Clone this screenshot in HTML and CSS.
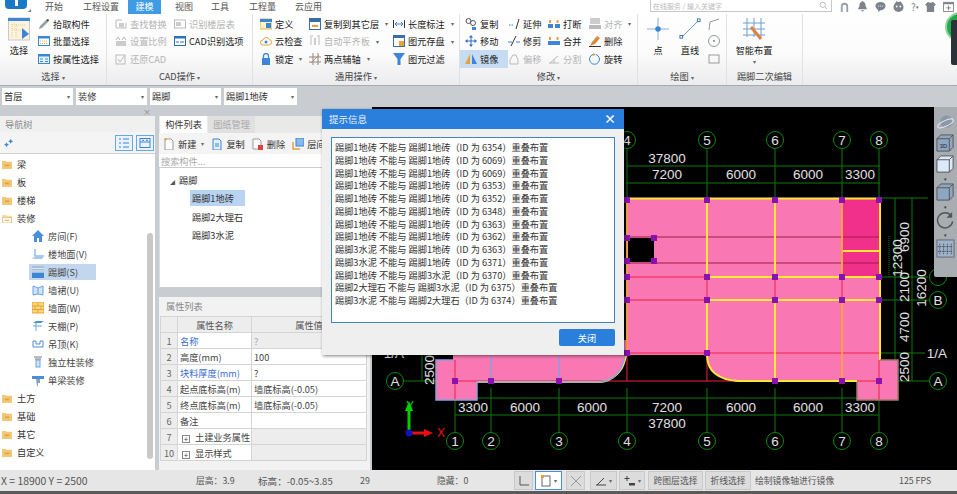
FILE: index.html
```html
<!DOCTYPE html>
<html lang="zh">
<head>
<meta charset="utf-8">
<title>GTJ</title>
<link rel="stylesheet" href="styles.css">
</head>
<body>
<div class="app">
  <header class="topbar">
    <div class="logo"><span class="logo-i"></span><span class="logo-arrow"></span></div>
    <nav class="tabs">
      <span class="tab w1">开始</span><span class="tab w2">工程设置</span><span class="tab active">建模</span><span class="tab w3">视图</span><span class="tab w4">工具</span><span class="tab w5">工程量</span><span class="tab">云应用</span>
    </nav>
    <div class="searchbox"><span class="searchtext">在线服务 / 输入关键字</span><svg class="ic9" viewBox="0 0 12 12"><circle cx="5" cy="5" r="3.5" fill="none" stroke="#aaa"/><path d="M8 8l3 3" stroke="#aaa"/></svg></div>
    <div class="topicons">
      <svg class="tic" viewBox="0 0 12 12"><path d="M2 12V6a4 4 0 018 0v6H8V6a2 2 0 00-4 0v6z" fill="#9aa0a6"/></svg>
      <svg class="tic" viewBox="0 0 12 12"><path d="M6 0a1 1 0 011 1c2 .6 2.400 2.500 2.400 4.500L11 9H1l1.600-3.500C2.600 3.500 3 1.600 5 1a1 1 0 011-1zM4.500 10h3a1.500 1.500 0 01-3 0z" fill="#7d8389"/></svg>
      <svg class="tic" viewBox="0 0 12 12"><ellipse cx="6" cy="5.500" rx="5.500" ry="4.500" fill="#7d8389"/><path d="M3 9l1 3 3-3z" fill="#7d8389"/><path d="M3.500 5.500h5" stroke="#fff" stroke-dasharray="1 1"/></svg>
      <svg class="tic" viewBox="0 0 12 12"><circle cx="6" cy="6.500" r="5.500" fill="#7d8389"/><path d="M2 3l2-3 2 2 2-2 2 3z" fill="#7d8389"/><circle cx="4" cy="6" r="1" fill="#fff"/><circle cx="8" cy="6" r="1" fill="#fff"/></svg>
      <span class="help">?<i class="tiny">▾</i></span>
      <svg class="tic" viewBox="0 0 12 12"><path d="M3 1l3 1 3-1 3 3-2 1.500V12H2V5.500L0 4z" fill="#7d8389"/></svg>
      <svg class="tic" viewBox="0 0 12 12"><path d="M.5 1.500h11v10H.5z" fill="#fff" stroke="#7d8389"/><path d="M.5 1.500h11v2H.5z" fill="#7d8389"/><path d="M6 5v5M3.500 7.500h5" stroke="#7d8389"/></svg>
    </div>
    <div class="float-ball"></div>
    <div class="float-strip"></div>
  </header>

  <section class="ribbon">
    <div class="group g-select">
      <div class="group-body p-select">
        <div class="bigbtn big-select">
          <svg class="big" viewBox="0 0 22 24"><rect x="0.500" y="1" width="21" height="22" fill="#fbf3df" stroke="#c9c9c9"/><rect x="0" y="1" width="22" height="3" fill="#3b86d8"/><path d="M4 7v14M8 7v14M4 8h14M4 13h14" stroke="#edc98a" stroke-dasharray="1 1"/><path d="M14 11l7 6-7 5z" fill="#3b86d8"/></svg>
          <span>选择</span>
        </div>
        <div class="col">
          <div class="rb"><svg class="ic" viewBox="0 0 12 12"><path d="M1 11l1-3 6-6 2 2-6 6z" fill="#9aa0a6"/><path d="M8 2l2-1 1 1-1 2z" fill="#444"/></svg><span>拾取构件</span></div>
          <div class="rb"><svg class="ic" viewBox="0 0 12 12"><rect x=".5" y="1.500" width="11" height="9" fill="#fff" stroke="#3b86d8"/><rect y="1" width="12" height="2.500" fill="#3b86d8"/><path d="M2 6h8M2 8.500h8" stroke="#e8a23a" stroke-dasharray="1 1"/></svg><span>批量选择</span></div>
          <div class="rb"><svg class="ic" viewBox="0 0 12 12"><rect x=".5" y="1.500" width="11" height="9" fill="#eaf2fb" stroke="#3b86d8"/><rect y="1" width="12" height="2.500" fill="#3b86d8"/><path d="M2 6h3M7 6h3M2 8.500h3M7 8.500h3" stroke="#3b86d8"/></svg><span>按属性选择</span></div>
        </div>
      </div>
      <div class="group-label">选择 <i class="tiny">▾</i></div>
    </div>

    <div class="group g-cad">
      <div class="group-body p-cad">
        <div class="col c-cad1 off">
          <div class="rb"><svg class="ic" viewBox="0 0 12 12"><path d="M1 2h6M1 2v8h10V5" fill="none" stroke="#bbb"/><rect x="4" y="5" width="5" height="4" fill="#ccc"/></svg><span>查找替换</span></div>
          <div class="rb"><svg class="ic" viewBox="0 0 12 12"><path d="M1 5l2-3 2 3M7 5l2-3 2 3" fill="none" stroke="#bbb"/><rect x="1" y="6" width="10" height="5" fill="#ccc"/></svg><span>设置比例</span></div>
          <div class="rb"><svg class="ic" viewBox="0 0 12 12"><rect x="1" y="2" width="9" height="9" fill="none" stroke="#bbb"/><path d="M3 6l2 3 5-7" fill="none" stroke="#bbb"/></svg><span>还原CAD</span></div>
        </div>
        <div class="col">
          <div class="rb off"><svg class="ic" viewBox="0 0 12 12"><rect x=".5" y="2" width="11" height="8" fill="none" stroke="#bbb"/><rect x="2" y="4" width="5" height="4" fill="#ccc"/></svg><span>识别楼层表</span></div>
          <div class="rb"><svg class="ic" viewBox="0 0 12 12"><rect x=".5" y="1.500" width="11" height="9" fill="#fff" stroke="#2b6fc0"/><rect y="1" width="12" height="2.500" fill="#2b6fc0"/><path d="M2 7h3M6 7h4" stroke="#2b6fc0"/></svg><span>CAD识别选项</span></div>
        </div>
      </div>
      <div class="group-label">CAD操作 <i class="tiny">▾</i></div>
    </div>

    <div class="group g-common">
      <div class="group-body p-common">
        <div class="col c-com1">
          <div class="rb"><svg class="ic" viewBox="0 0 12 12"><rect y="1" width="12" height="10" fill="#fff2c4" stroke="#d9b658"/><rect y="1" width="12" height="3" fill="#3b86d8"/><rect x="6" y="5" width="5" height="5" fill="#3b86d8"/></svg><span>定义</span></div>
          <div class="rb"><svg class="ic" viewBox="0 0 12 12"><path d="M3 10a2.500 2.500 0 010-5 3.500 3.500 0 016.500-.5A2.800 2.800 0 019 10z" fill="#fff" stroke="#e8a23a"/><circle cx="6" cy="7" r="1.500" fill="#3b86d8"/></svg><span>云检查</span></div>
          <div class="rb"><svg class="ic" viewBox="0 0 12 12"><rect x="2" y="5" width="8" height="7" fill="#3b86d8"/><path d="M3.500 5V3a2.500 2.500 0 015 0v2" fill="none" stroke="#3b86d8" stroke-width="1.300"/></svg><span>锁定</span><i class="tiny">▾</i></div>
        </div>
        <div class="col c-com2">
          <div class="rb"><svg class="ic" viewBox="0 0 12 12"><rect x=".5" y=".5" width="11" height="11" fill="#fff" stroke="#3b6ea8"/><rect y="0" width="12" height="4" fill="#3b6ea8"/><path d="M3 8h6" stroke="#e8a23a" stroke-width="2"/></svg><span>复制到其它层</span><i class="tiny">▾</i></div>
          <div class="rb off"><svg class="ic" viewBox="0 0 12 12"><path d="M2 2v8M10 2v8M1 1h3M8 1h3" stroke="#bbb" fill="none"/><rect x="5" y="3" width="2" height="7" fill="#ccc"/></svg><span>自动平齐板</span><i class="tiny">▾</i></div>
          <div class="rb"><svg class="ic" viewBox="0 0 12 12"><path d="M4 0v12M9 0v12M0 4h12M0 9h12" stroke="#888"/><path d="M2 10l8-8" stroke="#d98a3a"/></svg><span>两点辅轴</span><i class="tiny">▾</i></div>
        </div>
        <div class="col">
          <div class="rb"><svg class="ic" viewBox="0 0 12 12"><path d="M.5 2v8M11.500 2v8" stroke="#333"/><path d="M2 6h8M2 6l2-2M2 6l2 2M10 6L8 4M10 6L8 8" stroke="#3b86d8" fill="none"/></svg><span>长度标注</span><i class="tiny">▾</i></div>
          <div class="rb"><svg class="ic" viewBox="0 0 12 12"><rect x=".5" y=".5" width="11" height="11" fill="#fff" stroke="#3b6ea8"/><rect width="12" height="3" fill="#3b6ea8"/><rect x="6" y="6" width="5" height="5" fill="#e8a23a"/></svg><span>图元存盘</span><i class="tiny">▾</i></div>
          <div class="rb"><svg class="ic" viewBox="0 0 12 12"><path d="M0 0h12L7.500 6v6h-3V6z" fill="#3b86d8"/></svg><span>图元过滤</span></div>
        </div>
      </div>
      <div class="group-label">通用操作 <i class="tiny">▾</i></div>
    </div>

    <div class="group g-modify">
      <div class="group-body p-modify">
        <div class="col c-mod1">
          <div class="rb"><svg class="ic" viewBox="0 0 12 12"><circle cx="3.500" cy="3" r="2.500" fill="none" stroke="#555"/><circle cx="8" cy="5" r="2.500" fill="none" stroke="#555"/><path d="M7 9h4v3H7z" fill="#3b86d8"/></svg><span>复制</span></div>
          <div class="rb"><svg class="ic" viewBox="0 0 12 12"><path d="M6 0l2 2.500H4zM6 12l2-2.500H4zM0 6l2.500-2v4zM12 6L9.500 4v4z" fill="#2b6fc0"/><path d="M6 2v8M2 6h8" stroke="#2b6fc0"/></svg><span>移动</span></div>
          <div class="rb sel"><svg class="ic" viewBox="0 0 12 12"><path d="M5 1v10H0z" fill="#e8a23a"/><path d="M7 1v10h5z" fill="#3b86d8"/></svg><span>镜像</span></div>
        </div>
        <div class="col c-mod2">
          <div class="rb"><svg class="ic" viewBox="0 0 12 12"><path d="M1 7h5" stroke="#3b86d8" stroke-dasharray="1.500 1"/><path d="M8 11l3-10" stroke="#333"/></svg><span>延伸</span></div>
          <div class="rb"><svg class="ic" viewBox="0 0 12 12"><path d="M0 7h4M8 7h4" stroke="#3b86d8"/><path d="M3 11l5-10" stroke="#333"/></svg><span>修剪</span></div>
          <div class="rb off"><svg class="ic" viewBox="0 0 12 12"><path d="M2 11V7l3-5h3l2 5v4z" fill="none" stroke="#bbb"/></svg><span>偏移</span></div>
        </div>
        <div class="col c-mod3">
          <div class="rb"><svg class="ic" viewBox="0 0 12 12"><rect y="6" width="5" height="4" fill="#3b86d8"/><rect x="7" y="6" width="5" height="4" fill="#3b86d8"/><path d="M2 2v3M9.500 2v3" stroke="#e8a23a" stroke-width="2"/></svg><span>打断</span></div>
          <div class="rb"><svg class="ic" viewBox="0 0 12 12"><rect y="6" width="12" height="4" fill="#3b86d8"/><path d="M2 2v3M9.500 2v3" stroke="#e8a23a" stroke-width="2"/></svg><span>合并</span></div>
          <div class="rb off"><svg class="ic" viewBox="0 0 12 12"><path d="M1 10h10M2 10l8-7M6 10V6" fill="none" stroke="#bbb"/></svg><span>分割</span></div>
        </div>
        <div class="col">
          <div class="rb off"><svg class="ic" viewBox="0 0 12 12"><rect x="1" y="0" width="10" height="6" fill="#ccc"/><rect y="7" width="12" height="4" fill="#bbb"/></svg><span>对齐</span><i class="tiny">▾</i></div>
          <div class="rb"><svg class="ic" viewBox="0 0 12 12"><path d="M1 11l2-4 5-6 3 2-5 6z" fill="#d98a3a"/><path d="M0 11.500h12" stroke="#333"/></svg><span>删除</span></div>
          <div class="rb"><svg class="ic" viewBox="0 0 12 12"><path d="M7 1.500a5 5 0 11-3 0" fill="none" stroke="#3b86d8"/><path d="M4 0l3 1.500L4 3z" fill="#e8a23a"/></svg><span>旋转</span></div>
        </div>
      </div>
      <div class="group-label">修改 <i class="tiny">▾</i></div>
    </div>

    <div class="group g-draw">
      <div class="group-body p-draw">
        <div class="bigbtn big-dot">
          <svg class="big" viewBox="0 0 24 24"><path d="M12 0v24M0 12h24" stroke="#7fa9d6"/><circle cx="12" cy="12" r="3" fill="#3b86d8"/></svg>
          <span>点</span>
        </div>
        <div class="bigbtn big-line">
          <svg class="big" viewBox="0 0 24 24"><path d="M3 21L21 3" stroke="#5a8fc8"/><rect x="1" y="19" width="3" height="3" fill="#fff" stroke="#3b6ea8"/><rect x="20" y="1" width="3" height="3" fill="#fff" stroke="#3b6ea8"/></svg>
          <span>直线</span>
        </div>
        <div class="col">
          <div class="rb"><svg class="ic" viewBox="0 0 12 12"><path d="M1 12l1-8 9-3" fill="none" stroke="#999"/></svg></div>
          <div class="rb"><svg class="ic" viewBox="0 0 12 12"><circle cx="6" cy="6" r="5.500" fill="none" stroke="#999"/><circle cx="6" cy="6" r="1" fill="#5a8fc8"/></svg></div>
          <div class="rb"><svg class="ic" viewBox="0 0 12 12"><rect x="1" y="2" width="10" height="8" fill="none" stroke="#999"/></svg></div>
        </div>
      </div>
      <div class="group-label">绘图 <i class="tiny">▾</i></div>
    </div>

    <div class="group g-second">
      <div class="group-body p-second">
        <div class="bigbtn big-smart">
          <svg class="big" viewBox="0 0 22 24"><path d="M4 1v19M11 1v19M18 1v19M0 6h22M0 12h22M0 18h22" stroke="#6d9fd6"/><path d="M8 10l10 12" stroke="#e0833a" stroke-width="3"/></svg>
          <span>智能布置</span>
          <i class="tiny">▾</i>
        </div>
      </div>
      <div class="group-label">踢脚二次编辑</div>
    </div>
  </section>

  <section class="selectors">
    <div class="sel-box">首层<i class="tiny">▾</i></div>
    <div class="sel-box">装修<i class="tiny">▾</i></div>
    <div class="sel-box">踢脚<i class="tiny">▾</i></div>
    <div class="sel-box">踢脚1地砖<i class="tiny">▾</i></div>
  </section>

  <main class="main">
    <aside class="nav">
      <div class="nav-close">×</div>
      <div class="nav-title">导航树</div>
      <div class="nav-tools">
        <svg class="sparkle" viewBox="0 0 12 12"><path d="M3 5l1 2 2 1-2 1-1 2-1-2-2-1 2-1zM8 1l1 2 2 1-2 1-1 2-1-2-2-1 2-1z" fill="#3b86d8"/></svg>
        <span class="tool-btn"><svg viewBox="0 0 12 12"><path d="M1 2h2M1 6h2M1 10h2M5 2h6M5 6h6M5 10h6" stroke="#3b86d8"/></svg></span>
        <span class="tool-btn"><svg viewBox="0 0 12 12"><rect x="1" y="1.500" width="10" height="9" fill="none" stroke="#3b86d8"/><path d="M1 5h10M3 3.300h2M7 3.300h2" stroke="#3b86d8"/></svg></span>
      </div>
      <div class="tree">
        <div class="tree-scroll"></div>
        <div class="node"><svg class="folder" viewBox="0 0 11 10"><path d="M0 1h4l1 1h6v8H0z" fill="#f0c878"/><path d="M3 6h5" stroke="#e8a23a" stroke-width="2"/></svg>梁</div>
        <div class="node"><svg class="folder" viewBox="0 0 11 10"><path d="M0 1h4l1 1h6v8H0z" fill="#f0c878"/><path d="M3 6h5" stroke="#e8a23a" stroke-width="2"/></svg>板</div>
        <div class="node"><svg class="folder" viewBox="0 0 11 10"><path d="M0 1h4l1 1h6v8H0z" fill="#f0c878"/><path d="M3 6h5" stroke="#e8a23a" stroke-width="2"/></svg>楼梯</div>
        <div class="node"><svg class="folder" viewBox="0 0 11 10"><path d="M0 1h4l1 1h6v8H0z" fill="#f4dca8"/><path d="M0 4h11l-1 6H1z" fill="#fff" stroke="#e8c078"/><path d="M3 7h5" stroke="#e8a23a"/></svg>装修</div>
        <div class="sub"><svg class="subic" viewBox="0 0 12 12"><path d="M6 0l6 6h-2v6H7V8H5v4H2V6H0z" fill="#4a8fd8"/></svg>房间(F)</div>
        <div class="sub"><svg class="subic" viewBox="0 0 12 12"><path d="M3 1v7h9" fill="none" stroke="#5a9ae0"/><path d="M0 11l3-3h9l-2 3z" fill="#a8c8ea"/></svg>楼地面(V)</div>
        <div class="sub current"><svg class="subic" viewBox="0 0 12 12"><rect width="12" height="7" fill="#a8bfd8"/><path d="M0 2.500h12M0 5h12" stroke="#d8e4f0"/><rect y="7" width="12" height="5" fill="#3b86d8"/></svg>踢脚(S)</div>
        <div class="sub"><svg class="subic" viewBox="0 0 12 12"><path d="M1 2l5 2 5-2v9l-5-1-5 1z" fill="#cfe2f6" stroke="#6aa4e0"/><path d="M6 4v6" stroke="#6aa4e0"/></svg>墙裙(U)</div>
        <div class="sub"><svg class="subic" viewBox="0 0 12 12"><rect width="12" height="11" fill="#f8d878" stroke="#e8a23a"/><path d="M0 4h12M0 7.500h12M6 0v4M3 4v3.500M9 4v3.500M6 7.500v3.500" stroke="#e8a23a"/></svg>墙面(W)</div>
        <div class="sub"><svg class="subic" viewBox="0 0 12 12"><path d="M1 3l3-2h8l-3 2z" fill="#4a8fd8"/><path d="M4 3v8M1 6h9" stroke="#6aa4e0"/></svg>天棚(P)</div>
        <div class="sub"><svg class="subic" viewBox="0 0 12 12"><path d="M1 3v6h10V3H8v3H4V3z" fill="none" stroke="#4a8fd8"/></svg>吊顶(K)</div>
        <div class="sub"><svg class="subic" viewBox="0 0 12 12"><path d="M2 1h8M3 3h6" stroke="#777"/><rect x="4" y="4" width="4" height="7" fill="#cfe2f6" stroke="#6aa4e0"/></svg>独立柱装修</div>
        <div class="sub"><svg class="subic" viewBox="0 0 12 12"><path d="M0 2h12v3H0z" fill="#4a8fd8"/><path d="M4 5h4v4H6v3H5z" fill="#8aa0b8"/></svg>单梁装修</div>
        <div class="node"><svg class="folder" viewBox="0 0 11 10"><path d="M0 1h4l1 1h6v8H0z" fill="#f0c878"/><path d="M3 6h5" stroke="#e8a23a" stroke-width="2"/></svg>土方</div>
        <div class="node"><svg class="folder" viewBox="0 0 11 10"><path d="M0 1h4l1 1h6v8H0z" fill="#f0c878"/><path d="M3 6h5" stroke="#e8a23a" stroke-width="2"/></svg>基础</div>
        <div class="node"><svg class="folder" viewBox="0 0 11 10"><path d="M0 1h4l1 1h6v8H0z" fill="#f0c878"/><path d="M3 6h5" stroke="#e8a23a" stroke-width="2"/></svg>其它</div>
        <div class="node"><svg class="folder" viewBox="0 0 11 10"><path d="M0 1h4l1 1h6v8H0z" fill="#f0c878"/><path d="M3 6h5" stroke="#e8a23a" stroke-width="2"/></svg>自定义</div>
      </div>
    </aside>

    <section class="mid">
      <div class="list-panel">
        <div class="mid-tabs"><span class="mtab on">构件列表</span><span class="mtab">图纸管理</span></div>
        <div class="mid-tools">
          <span class="mt"><svg class="ic" viewBox="0 0 12 12"><path d="M2 1h6l2 2v9H2z" fill="#fff" stroke="#999"/><path d="M1 1l3 0M2.500 0v3" stroke="#e8a23a"/></svg>新建<i class="tiny">▾</i></span>
          <span class="mt"><svg class="ic" viewBox="0 0 12 12"><path d="M2 1h6l2 2v9H2z" fill="#e4effb" stroke="#3b86d8"/><path d="M4 6h4M4 8h4" stroke="#3b86d8"/></svg>复制</span>
          <span class="mt"><svg class="ic" viewBox="0 0 12 12"><path d="M1 1h6l2 2v8H1z" fill="#fff" stroke="#999"/><rect x="6" y="7" width="5" height="5" fill="#e04040"/></svg>删除</span>
          <span class="mt"><svg class="ic" viewBox="0 0 12 12"><rect x="4" y="0" width="8" height="8" fill="#8ab8ea" stroke="#3b86d8"/><path d="M1 4v7h7" fill="none" stroke="#e8a23a" stroke-width="1.500"/></svg>层间</span>
        </div>
        <div class="mid-search">搜索构件...</div>
        <div class="comp-tree">
          <div class="comp-root"><i class="tri">◢</i>踢脚</div>
          <div class="comp-item picked">踢脚1地砖</div>
          <div class="comp-item">踢脚2大理石</div>
          <div class="comp-item">踢脚3水泥</div>
        </div>
      </div>
      <div class="prop-panel">
        <div class="prop-title">属性列表</div>
        <table class="prop">
          <thead><tr><th class="n"></th><th class="k">属性名称</th><th class="v">属性值</th></tr></thead>
          <tbody>
            <tr><td class="n">1</td><td class="k link">名称</td><td class="v grey faint">?</td></tr>
            <tr><td class="n">2</td><td class="k">高度(mm)</td><td class="v">100</td></tr>
            <tr><td class="n">3</td><td class="k link">块料厚度(mm)</td><td class="v">?</td></tr>
            <tr><td class="n">4</td><td class="k">起点底标高(m)</td><td class="v">墙底标高(-0.05)</td></tr>
            <tr><td class="n">5</td><td class="k">终点底标高(m)</td><td class="v">墙底标高(-0.05)</td></tr>
            <tr><td class="n">6</td><td class="k">备注</td><td class="v"></td></tr>
            <tr><td class="n">7</td><td class="k"><span class="plus">+</span>土建业务属性</td><td class="v grey"></td></tr>
            <tr><td class="n">10</td><td class="k"><span class="plus">+</span>显示样式</td><td class="v grey"></td></tr>
          </tbody>
        </table>
      </div>
    </section>

    <section class="canvas">
      <svg class="cad" viewBox="372 107 585 363">
        <defs>
          <rect id="q" x="-3" y="-3" width="6" height="6" fill="#8a10b0"/>
        </defs>
        <g class="dim" fill="none">
          <path d="M627 166H880M627 183H880M455 398H879M455 415H879"/>
          <path d="M455 388V432M491 388V432M559 388V432M627 388V432M707 388V432M775 388V432M842 388V432M879 388V432"/>
          <path d="M627 148V198M707 148V198M775 148V198M842 148V198M879 148V198"/>
          <path d="M880 198H928M880 277H928M880 300H929M880 353H925M880 381H929M895 198V381M912 198V381M403 381H445M422 355V381"/>
          <path d="M889 236V277" stroke-dasharray="1 1"/>
        </g>
        <path class="pink" d="M627 198H880V360H898V400H857V382H738Q707 378 707 355H626Q626 378 600 381H477V400H436V360H453V340H627Z"/>
        <rect class="dark-pink" x="843" y="199" width="36" height="78"/>
        <rect x="627" y="238" width="27" height="24" fill="#000"/>
        <g class="red">
          <path d="M627 277H880M627 300H880M627 353H880M455 381H880M707 198V355M775 277V300M842 277V300"/>
          <path d="M455 360V400M627 353V381M707 353V381M879 360V400"/>
        </g>
        <path class="maroon" d="M627 237H879M627 263H879"/>
        <g class="yellow">
          <path d="M627 198.500H880M880 198V360M707 198V277M775 198V277M843 251H879"/>
          <path d="M707 277H880M707 300H880M707 300V353M775 300V381"/>
          <path d="M707 356Q708 379 738 381H857M477 382H600Q620 380 626 356"/>
        </g>
        <path class="orange" d="M842 198V277M842 300V381M627 198V353"/>
        <path class="blue-o" d="M453 360H436V400H477V382H600Q620 380 625 356M491 355V381M559 355V381"/>
        <path class="brown-o" d="M880 360H898V400H857V382"/>
        <g>
          <use href="#q" x="627" y="200"/><use href="#q" x="707" y="200"/><use href="#q" x="775" y="200"/><use href="#q" x="842" y="200"/><use href="#q" x="879" y="200"/>
          <use href="#q" x="627" y="277"/><use href="#q" x="707" y="277"/><use href="#q" x="775" y="277"/><use href="#q" x="842" y="277"/><use href="#q" x="879" y="277"/>
          <use href="#q" x="627" y="300"/><use href="#q" x="707" y="300"/><use href="#q" x="775" y="300"/><use href="#q" x="842" y="300"/><use href="#q" x="879" y="300"/>
          <use href="#q" x="627" y="353"/><use href="#q" x="707" y="353"/>
          <use href="#q" x="455" y="381"/><use href="#q" x="491" y="381"/><use href="#q" x="559" y="381"/><use href="#q" x="775" y="381"/><use href="#q" x="842" y="381"/><use href="#q" x="879" y="381"/>
          <use href="#q" x="627" y="238"/><use href="#q" x="654" y="238"/><use href="#q" x="654" y="261"/><use href="#q" x="627" y="261"/>
        </g>
        <g class="circles">
          <circle cx="627" cy="140" r="8.500"/><circle cx="707" cy="140" r="8.500"/><circle cx="775" cy="140" r="8.500"/><circle cx="842" cy="140" r="8.500"/><circle cx="879" cy="140" r="8.500"/>
          <circle cx="455" cy="441" r="8.500"/><circle cx="491" cy="441" r="8.500"/><circle cx="559" cy="441" r="8.500"/><circle cx="627" cy="441" r="8.500"/><circle cx="707" cy="441" r="8.500"/><circle cx="775" cy="441" r="8.500"/><circle cx="842" cy="441" r="8.500"/><circle cx="879" cy="441" r="8.500"/>
          <circle cx="395" cy="381" r="8.500"/><circle cx="938" cy="381" r="8.500"/><circle cx="938" cy="300" r="8.500"/><circle cx="938" cy="277" r="8.500"/>
        </g>
        <g class="lbl">
          <text x="627" y="145">4</text><text x="707" y="145">5</text><text x="775" y="145">6</text><text x="842" y="145">7</text><text x="879" y="145">8</text>
          <text x="455" y="446">1</text><text x="491" y="446">2</text><text x="559" y="446">3</text><text x="627" y="446">4</text><text x="707" y="446">5</text><text x="775" y="446">6</text><text x="842" y="446">7</text><text x="879" y="446">8</text>
          <text x="395" y="386">A</text><text x="938" y="386">A</text><text x="938" y="305">B</text><text x="937" y="358">1/A</text><text x="394" y="358">1/A</text>
          <text x="667" y="163">37800</text><text x="667" y="179">7200</text><text x="741" y="179">6000</text><text x="808" y="179">6000</text><text x="860" y="179">3300</text>
          <text x="473" y="412">3300</text><text x="525" y="412">6000</text><text x="592" y="412">6000</text><text x="667" y="412">7200</text><text x="741" y="412">6000</text><text x="808" y="412">6000</text><text x="860" y="412">3300</text><text x="667" y="428">37800</text>
          <text transform="translate(909 237) rotate(-90)">6900</text>
          <text transform="translate(902 258) rotate(-90)">12300</text>
          <text transform="translate(909 287) rotate(-90)">2100</text>
          <text transform="translate(926 288) rotate(-90)">16200</text>
          <text transform="translate(909 327) rotate(-90)">4700</text>
          <text transform="translate(909 367) rotate(-90)">2500</text>
          <text transform="translate(434 370) rotate(-90)">2500</text>
        </g>
        <g class="gizmo">
          <path d="M409 433V410" stroke="#00d000" stroke-width="3"/><path d="M409 401l-4 10h8z" fill="#00d000"/>
          <path d="M409 433H426" stroke="#e81010" stroke-width="3"/><path d="M433 433l-9-4v8z" fill="#e81010"/>
          <circle cx="409" cy="433" r="3.500" fill="#1010c0"/>
          <text class="gy" x="410" y="410">Y</text>
          <text class="gx" x="437" y="437">X</text>
        </g>
      </svg>
      <div class="viewbar">
        <svg class="vi" viewBox="0 0 20 20"><circle cx="11" cy="9" r="6.500" fill="#8a98a8"/><ellipse cx="10" cy="11" rx="9" ry="3" fill="none" stroke="#e4e6ee" transform="rotate(-25 10 11)"/></svg>
        <svg class="vi" viewBox="0 0 20 20"><path d="M1 5l4-4h13v13l-4 4H1z" fill="#8ea6c0" stroke="#555"/><path d="M1 5h13v13M14 5l4-4" fill="none" stroke="#555"/><text x="4" y="15" class="vt">3D</text></svg>
        <svg class="vi" viewBox="0 0 20 20"><path d="M1 5l4-4h13v13l-4 4H1z" fill="#dbeafa" stroke="#555"/><path d="M1 5h13v13M14 5l4-4" fill="none" stroke="#555"/></svg>
        <i class="tiny vi-a">▾</i>
        <svg class="vi" viewBox="0 0 20 20"><path d="M1 5l4-4h13v13l-4 4H1z" fill="#8ea6c0" stroke="#555"/><path d="M1 5h13v13M14 5l4-4" fill="none" stroke="#555"/></svg>
        <i class="tiny vi-a">▾</i>
        <svg class="vi" viewBox="0 0 20 20"><path d="M16 5a8 8 0 101.500 6" fill="none" stroke="#555" stroke-width="1.500"/><path d="M17 1v6h-6z" fill="#555"/></svg>
        <i class="tiny vi-a">▾</i>
        <svg class="vi" viewBox="0 0 20 20"><rect x="1" y="1" width="18" height="18" fill="#9fb4c8" stroke="#667"/><path d="M4 5v11M8 5v11M12 5v11M16 5v11M2 8h16M2 13h16" stroke="#334" stroke-dasharray="1 1"/></svg>
      </div>
    </section>

    <div class="dialog">
      <div class="dlg-title"><span>提示信息</span><span class="dlg-x">×</span></div>
      <div class="dlg-body">
        <div class="msg">
          <p>踢脚1地砖 不能与 踢脚1地砖（ID 为 6354）重叠布置</p>
          <p>踢脚1地砖 不能与 踢脚1地砖（ID 为 6069）重叠布置</p>
          <p>踢脚1地砖 不能与 踢脚1地砖（ID 为 6069）重叠布置</p>
          <p>踢脚1地砖 不能与 踢脚1地砖（ID 为 6353）重叠布置</p>
          <p>踢脚1地砖 不能与 踢脚1地砖（ID 为 6352）重叠布置</p>
          <p>踢脚1地砖 不能与 踢脚1地砖（ID 为 6348）重叠布置</p>
          <p>踢脚1地砖 不能与 踢脚1地砖（ID 为 6363）重叠布置</p>
          <p>踢脚1地砖 不能与 踢脚1地砖（ID 为 6362）重叠布置</p>
          <p>踢脚3水泥 不能与 踢脚1地砖（ID 为 6363）重叠布置</p>
          <p>踢脚3水泥 不能与 踢脚1地砖（ID 为 6371）重叠布置</p>
          <p>踢脚1地砖 不能与 踢脚3水泥（ID 为 6370）重叠布置</p>
          <p>踢脚2大理石 不能与 踢脚3水泥（ID 为 6375）重叠布置</p>
          <p>踢脚3水泥 不能与 踢脚2大理石（ID 为 6374）重叠布置</p>
        </div>
        <div class="dlg-foot"><button class="dlg-btn">关闭</button></div>
      </div>
    </div>
  </main>

  <footer class="status">
    <span class="s-xy">X = 18900 Y = 2500</span>
    <span class="s-h">层高：3.9</span>
    <span class="s-e">标高：-0.05~3.85</span>
    <span class="s-n">29</span>
    <span class="s-hide">隐藏：0</span>
    <span class="sb s1"><svg class="ic" viewBox="0 0 12 12"><path d="M2 1v9h9" fill="none" stroke="#555"/></svg></span>
    <span class="sb s2"><svg class="ic" viewBox="0 0 12 12"><rect x="2" y="1" width="8" height="10" fill="#fff" stroke="#666"/><rect x="1" y="0" width="3" height="3" fill="#e8a23a"/></svg><i class="tiny">▾</i></span>
    <span class="sb s3"><svg class="ic" viewBox="0 0 12 12"><path d="M1 1l10 10M11 1L1 11" stroke="#999"/></svg></span>
    <span class="sb s4"><svg class="ic" viewBox="0 0 12 12"><path d="M1 10h10M2 10l7-7" stroke="#444"/></svg><i class="tiny">▾</i></span>
    <span class="sb s5"><svg class="ic" viewBox="0 0 12 12"><path d="M3 1v5M.5 3.500h5" stroke="#444"/><rect x="5" y="8" width="6" height="2.500" fill="#444"/></svg><i class="tiny">▾</i></span>
    <span class="sb s6">跨图层选择</span>
    <span class="sb s7">折线选择</span>
    <span class="s-msg">绘制镜像轴进行镜像</span>
    <span class="s-fps">125 FPS</span>
  </footer>
  <div class="under"></div>
</div>
</body>
</html>
```
FILE: styles.css
```css
* { box-sizing: border-box; }
html, body { margin: 0; padding: 0; }
body { width: 957px; height: 494px; overflow: hidden; font-family: "Noto Sans CJK SC", "Liberation Sans", sans-serif; font-size: 9.2px; color: #333; background: #c9ccd0; }
i { font-style: normal; }
.app { position: relative; width: 957px; height: 494px; display: flex; flex-direction: column; overflow: hidden; }
.tiny { font-size: 6px; color: #666; }

/* top bar */
.topbar { position: relative; height: 14px; flex: none; display: flex; background: #fff; }
.logo { position: relative; width: 22px; height: 9px; margin-left: 5px; background: #1b78c8; border-radius: 0 0 4px 4px; }
.logo-i { display: block; width: 3px; height: 6px; margin: 0 auto; background: #fff; }
.logo-arrow { position: absolute; left: 23px; top: 9px; border-left: 3px solid transparent; border-bottom: 3px solid #777; }
.tabs { display: flex; margin-left: 18px; height: 14px; }
.tab { line-height: 14px; margin-right: 19px; color: #555; white-space: nowrap; font-size: 9px; }
.tab.w1 { margin-right: 20px; }
.tab.w2 { margin-right: 9px; }
.tab.active { background: #3f9be4; color: #fff; width: 33px; text-align: center; margin-right: 14px; }
.tab.w3 { margin-right: 18px; }
.tab.w4 { margin-right: 20px; }
.tab.w5 { margin-right: 19px; }
.searchbox { position: absolute; left: 650px; top: -1px; width: 182px; height: 13px; border: 1px solid #c8c8c8; display: flex; align-items: center; justify-content: space-between; padding: 0 3px 0 2px; }
.searchtext { font-size: 7px; color: #bbb; }
.ic9 { width: 9px; height: 9px; }
.topicons { position: absolute; left: 839px; top: 1px; display: flex; align-items: flex-start; gap: 7px; }
.tic { width: 11px; height: 11px; flex: none; }
.help { display: flex; align-items: center; height: 12px; font-size: 10px; line-height: 12px; color: #7d8389; width: 11px; margin-right: -4px; flex: none; }
.help .tiny { font-size: 5px; }
.float-ball { position: absolute; left: 945px; top: 12px; width: 30px; height: 30px; border-radius: 50%; background: #27a84a; border: 2px solid #8fd89f; z-index: 3; }
.float-strip { position: absolute; left: 951px; top: 20px; width: 6px; height: 45px; background: #2c3338; border-radius: 2px 0 0 2px; z-index: 4; }

/* ribbon */
.ribbon { height: 72px; flex: none; display: flex; background: linear-gradient(#fff, #fbfbfb 55%, #ebecee); border-bottom: 1px solid #a8abae; }
.group { display: flex; flex-direction: column; border-right: 1px solid #dfe1e3; }
.g-select { width: 107px; }
.g-cad { width: 146px; }
.g-common { width: 207px; }
.g-modify { width: 178px; }
.g-draw { width: 89px; }
.g-second { width: 76px; }
.group-body { height: 54px; padding-top: 1px; display: flex; }
.group-label { height: 17px; line-height: 17px; text-align: center; color: #444; white-space: nowrap; }
.p-select { padding-left: 8px; gap: 8px; }
.p-cad { padding-left: 8px; }
.p-common { padding-left: 7px; }
.p-modify { padding-left: 5px; }
.p-draw { padding-left: 6px; }
.p-second { padding-left: 6px; }
.col { display: flex; flex-direction: column; }
.rb { height: 17.500px; display: flex; align-items: center; gap: 3px; white-space: nowrap; color: #222; }
.rb .tiny { margin-left: 3px; }
.ic { width: 12px; height: 12px; flex: none; }
.off, .off .rb, .rb.off { color: #b4b4b4; }
.sel { background: #c6dcf3; margin-left: -5px; padding-left: 5px; }
.c-cad1 { width: 59px; }
.c-com1 { width: 49px; }
.c-com2 { width: 84px; }
.c-mod1 { width: 43px; }
.c-mod2 { width: 40px; }
.c-mod3 { width: 41px; }
.bigbtn { display: flex; flex-direction: column; align-items: center; color: #222; white-space: nowrap; }
.big { width: 22px; height: 24px; margin: 2px 0 2px; }
.big-select { width: 22px; }
.big-dot { width: 24px; margin: 0 8px 0 2px; }
.big-line { width: 24px; margin-right: 6px; }
.big-smart { width: 40px; margin-left: 1px; }

/* selector row */
.selectors { height: 21px; flex: none; display: flex; gap: 3px; padding: 2px 0 2px 2px; background: #c9ccd0; }
.sel-box { width: 71px; height: 17px; line-height: 17px; background: #fff; padding-left: 2px; position: relative; color: #333; display: flex; justify-content: space-between; padding-right: 3px; }
.sel-box:last-child { width: 73px; }

/* main */
.main { position: relative; height: 363px; flex: none; display: flex; background: #c9ccd0; }

.nav { width: 155px; flex: none; background: #fff; display: flex; flex-direction: column; }
.nav-close { height: 9px; line-height: 9px; background: #c9ccd0; text-align: right; padding-right: 4px; color: #888; font-size: 8px; }
.nav-title { height: 16px; line-height: 16px; padding-left: 5px; background: #f0f0f0; color: #888; }
.nav-tools { height: 22px; flex: none; display: flex; align-items: center; gap: 3px; background: #f4f4f4; border-bottom: 1px solid #d0d0d0; padding: 0 1px 0 4px; }
.sparkle { width: 10px; height: 10px; margin-right: auto; }
.tool-btn { width: 18px; height: 16px; border: 1px solid #6aa8e4; background: #eaf3fc; padding: 1px 2px; display: flex; }
.tool-btn svg { width: 12px; height: 12px; }
.tree { position: relative; flex: 1; padding-top: 1px; }
.tree-scroll { position: absolute; left: 147px; top: 79px; width: 6px; height: 226px; background: #c8c8c8; border-radius: 3px; }
.node { height: 18px; display: flex; align-items: center; gap: 5px; padding-left: 2px; color: #333; }
.folder { width: 10px; height: 9px; flex: none; }
.sub { height: 18px; display: flex; align-items: center; padding-left: 32px; gap: 4px; color: #444; width: 96px; white-space: nowrap; }
.sub.current { background: #c2d6ee; margin-left: 29px; padding-left: 3px; width: 67px; height: 16px; margin-top: 1px; margin-bottom: 1px; }
.subic { width: 12px; height: 12px; flex: none; }

.mid { width: 213px; flex: none; margin-left: 4px; display: flex; flex-direction: column; }
.list-panel { height: 172px; margin-top: 9px; margin-right: 2px; background: #fff; display: flex; flex-direction: column; }
.mid-tabs { height: 17px; display: flex; background: #e9e9e9; align-items: flex-end; padding-left: 1px; }
.mtab { width: 47px; height: 17px; line-height: 17px; text-align: center; color: #aaa; background: #e0e0e0; margin-right: 1px; }
.mtab.on { background: #fff; color: #333; }
.mid-tools { height: 21px; display: flex; align-items: center; gap: 7px; padding-left: 4px; background: #f4f4f4; overflow: hidden; white-space: nowrap; }
.mt { display: flex; align-items: center; gap: 3px; }
.mt .tiny { margin-left: 2px; }
.mid-search { height: 14px; line-height: 14px; padding-left: 2px; color: #aaa; background: #fff; border-bottom: 1px solid #ccc; }
.comp-tree { flex: 1; padding: 3px 0 0 10px; border-left: 1px solid #ddd; border-bottom: 1px solid #ccc; }
.comp-root { height: 18px; line-height: 18px; }
.comp-root .tri { font-size: 5px; color: #555; margin-right: 4px; }
.comp-item { height: 18px; line-height: 18px; margin-left: 20px; padding-left: 2px; width: 62px; white-space: nowrap; }
.comp-item.picked { background: #b9d3f3; width: 55px; height: 16px; line-height: 16px; margin-bottom: 2px; margin-top: 1px; }
.prop-panel { margin-top: 9px; flex: 1; margin-right: 2px; background: #f2f2f2; }
.prop-title { height: 19px; line-height: 19px; padding-left: 7px; color: #888; }
.prop { border-collapse: collapse; table-layout: fixed; width: 207px; margin-left: 1px; }
.prop th, .prop td { height: 16px; padding: 0 2px; border: 1px solid #d4d4d4; font-weight: normal; white-space: nowrap; overflow: hidden; line-height: 14px; }
.prop .n { width: 17px; background: #ededed; text-align: center; color: #666; }
.prop .k { width: 74px; background: #fff; color: #444; }
.prop .v { background: #fff; color: #444; }
.prop th.k, .prop th.v { background: #ededed; text-align: center; color: #555; }
.prop .link { color: #3b6fd8; }
.prop .grey { background: #ededed; }
.prop .faint { color: #aaa; }
.plus { display: inline-block; width: 8px; height: 8px; line-height: 6px; border: 1px solid #888; text-align: center; font-size: 8px; margin: 0 5px 0 2px; vertical-align: -1px; background: #fff; }

.canvas { position: relative; flex: 1; background: #000; overflow: hidden; }
.cad { display: block; width: 585px; height: 363px; }
.dim path { stroke: #0a7a0a; stroke-width: 1; fill: none; }
.pink { fill: #f978b4; }
.dark-pink { fill: #f0308a; }
.red path { stroke: #f02040; stroke-width: 1; fill: none; }
.maroon { stroke: #a01848; stroke-width: 1; fill: none; }
.yellow path { stroke: #ffe933; stroke-width: 2; fill: none; }
.orange { stroke: #ffa040; stroke-width: 2; fill: none; }
.blue-o { stroke: #8a9ee0; stroke-width: 1.500; fill: none; }
.brown-o { stroke: #a07868; stroke-width: 1.500; fill: none; }
.circles circle { fill: none; stroke: #0a8a0a; stroke-width: 1; }
.lbl text { fill: #e0e0e0; font: 13.500px "Liberation Sans", sans-serif; text-anchor: middle; }
.gy { fill: #00d000; font: 12px "Liberation Sans", sans-serif; text-anchor: middle; }
.gx { fill: #f01010; font: 12px "Liberation Sans", sans-serif; }
.viewbar { position: absolute; top: 0; right: 0; width: 23px; height: 170px; background: #a8adb2; display: flex; flex-direction: column; align-items: center; padding-top: 6px; gap: 2px; border-radius: 0 0 0 2px; }
.vi { width: 19px; height: 19px; flex: none; }
.vi-a { line-height: 5px; height: 5px; color: #333; font-size: 5px; }
.vt { font: 6px "Liberation Sans", sans-serif; fill: #223; }

/* dialog */
.dialog { position: absolute; left: 322px; top: 2px; width: 302px; height: 246px; background: #efefef; box-shadow: 1px 1px 3px rgba(0, 0, 0, .5); display: flex; flex-direction: column; z-index: 5; }
.dlg-title { height: 20px; background: #2b7fdc; color: #e8f2fc; padding: 0 8px 0 7px; display: flex; justify-content: space-between; align-items: center; font-size: 9.500px; flex: none; }
.dlg-x { font-size: 12px; font-weight: bold; color: #fff; line-height: 12px; }
.dlg-body { flex: 1; padding: 8px 9px 9px; display: flex; flex-direction: column; }
.msg { height: 186px; background: #fff; border: 1px solid #3b86c8; padding: 3px 3px; }
.msg p { margin: 0; height: 12.750px; line-height: 12.750px; white-space: nowrap; color: #333; font-size: 9.200px; }
.dlg-foot { flex: 1; display: flex; justify-content: flex-end; align-items: flex-start; padding-top: 6px; }
.dlg-btn { width: 56px; height: 17px; border: 0; border-radius: 2px; background: #2b7fdc; color: #fff; font: 9.200px "Noto Sans CJK SC", sans-serif; padding: 0; }

/* status */
.status { height: 21px; flex: none; display: flex; align-items: center; background: #e6e6e6; color: #555; white-space: nowrap; font-size: 8.800px; }
.s-xy { width: 196px; padding-left: 1px; font-size: 10.400px; }
.s-h { width: 62px; }
.s-e { width: 102px; font-size: 9.600px; }
.s-n { width: 77px; }
.s-hide { width: 77px; }
.sb { height: 19px; display: flex; align-items: center; justify-content: center; gap: 2px; background: #dcdcdc; border: 1px solid #c8c8c8; flex: none; }
.s1 { width: 19px; margin-right: 2px; }
.s2 { width: 27px; margin-right: 4px; background: #fff; border-color: #4a90d8; }
.s3 { width: 19px; margin-right: 5px; }
.s4 { width: 27px; margin-right: 2px; }
.s5 { width: 26px; margin-right: 3px; }
.s6 { width: 55px; margin-right: 2px; }
.s7 { width: 46px; margin-right: 4px; }
.s-msg { width: 144px; }
.s-fps { width: 40px; }
.under { flex: 1; background: #5a5a5a; }
```
